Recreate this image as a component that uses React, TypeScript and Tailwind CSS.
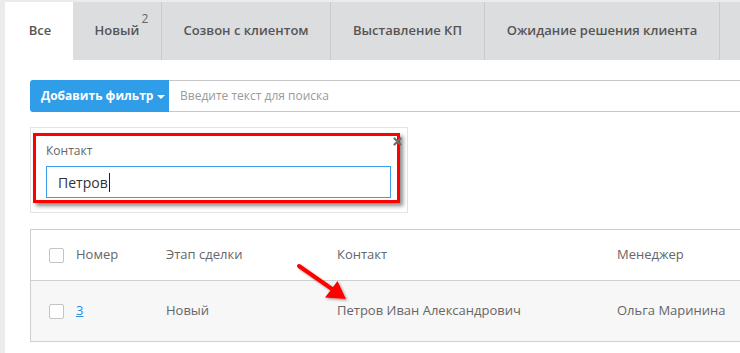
import React from 'react';

const tabs = [
  { label: 'Все', width: 'w-[68px]', active: true },
  { label: 'Новый', width: 'w-[89px]', badge: '2' },
  { label: 'Созвон с клиентом', width: 'w-[169px]' },
  { label: 'Выставление КП', width: 'w-[154px]' },
  { label: 'Ожидание решения клиента', width: 'w-[235px]' },
  { label: '', width: 'w-[40px]' },
];

const Checkbox = () => <span className="block h-[15px] w-[15px] rounded-[2px] border border-[#c4c4c4] bg-white" />;

const App = () => {
  return (
    <div
      className="relative h-[353px] w-[740px] overflow-hidden bg-[#ebebeb] pl-[5px] pt-[2px] text-[13px] text-[#666]"
      style={{ fontFamily: '"Open Sans", "Noto Sans", sans-serif' }}
    >
      <div className="flex h-[58px] bg-[#dcdddf]">
        {tabs.map((tab, i) => (
          <div
            key={i}
            className={`relative flex shrink-0 items-center justify-center font-semibold text-[#555] ${tab.width} ${
              tab.active ? 'bg-white pl-[2px]' : 'border-r border-[#c9cacc]'
            }`}
          >
            <span className="relative">
              {tab.label}
              {tab.badge && (
                <span className="absolute -right-[9px] -top-[11px] text-[12px] font-normal text-[#666]">{tab.badge}</span>
              )}
            </span>
          </div>
        ))}
      </div>

      <div className="h-full bg-white pl-[25px] pt-[20px]">
        <div className="flex h-[32px]">
          <button className="flex w-[139px] shrink-0 items-center gap-[4px] rounded-l-[3px] bg-[#2f9de8] pl-[11px] text-[12px] font-bold text-white">
            Добавить фильтр
            <span className="mt-[1px] h-0 w-0 border-x-[4px] border-t-[4px] border-x-transparent border-t-white" />
          </button>
          <div className="flex flex-1 items-center border-y border-[#c6c6c6] pl-[11px] text-[12px] text-[#9a9a9a]">
            Введите текст для поиска
          </div>
        </div>

        <div className="relative mt-[15px] h-[86px] w-[378px] border border-[#e3e3e3] pl-[2px] pt-[5px]">
          <div className="h-[70px] w-[367px] border-[3px] border-[#f00] bg-white pl-[10px] pr-[6px] pt-[7px] shadow-[3px_3px_4px_rgba(0,0,0,0.45)]">
            <div className="text-[12px] leading-[16px] text-[#666]">Контакт</div>
            <div className="mt-[7px] flex h-[32px] items-center border border-[#3a9de6] pl-[11px] text-[14px] text-[#333]">
              Петров<span className="ml-[1px] h-[19px] w-px bg-[#222]" />
            </div>
          </div>
          <svg className="absolute right-[5px] top-[9px]" width="9" height="9" viewBox="0 0 9 9">
            <path d="M1.5 1.5 L7.5 7.5 M7.5 1.5 L1.5 7.5" stroke="#6d6d6d" strokeWidth="2.2" strokeLinecap="round" />
          </svg>
        </div>

        <div className="mt-[16px] border-y border-l border-[#cfcfcf]">
          <div className="grid h-[51px] grid-cols-[45px_90px_171px_280px_1fr] items-center border-b border-[#cfcfcf] bg-white">
            <div className="pl-[18px]">
              <Checkbox />
            </div>
            <div>Номер</div>
            <div>Этап сделки</div>
            <div>Контакт</div>
            <div>Менеджер</div>
          </div>
          <div className="grid h-[60px] grid-cols-[45px_90px_171px_280px_1fr] items-center bg-[#f7f7f7]">
            <div className="pl-[18px]">
              <Checkbox />
            </div>
            <div>
              <span className="text-[#2a8fdc] underline">3</span>
            </div>
            <div>Новый</div>
            <div>Петров Иван Александрович</div>
            <div>Ольга Маринина</div>
          </div>
        </div>
      </div>

      <svg className="absolute left-[293px] top-[260px]" width="60" height="45" viewBox="0 0 60 45">
        <defs>
          <filter id="sh" x="-20%" y="-20%" width="160%" height="160%">
            <feDropShadow dx="1.5" dy="1.5" stdDeviation="1" floodColor="#000" floodOpacity="0.35" />
          </filter>
        </defs>
        <g filter="url(#sh)">
          <path d="M6 6 L39 29" stroke="#f00" strokeWidth="4" strokeLinecap="round" />
          <path d="M53 39 L32 37.5 L44.5 21 Z" fill="#f00" />
        </g>
      </svg>
    </div>
  );
};

export default App;
